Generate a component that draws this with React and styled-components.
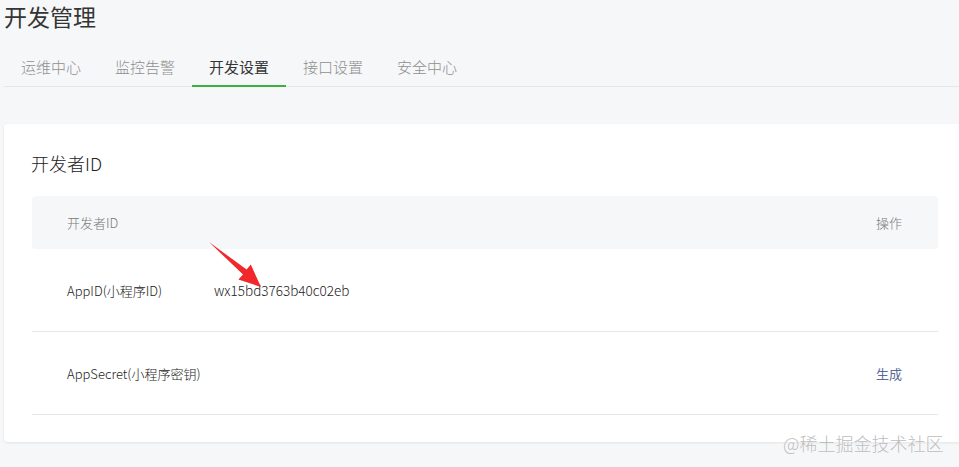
import React from "react";
import styled, { createGlobalStyle } from "styled-components";

const Global = createGlobalStyle`
  html, body { margin: 0; padding: 0; background: #f6f7f9; overflow: hidden; }
  body { font-family: "Noto Sans CJK SC", "Noto Sans", sans-serif; color: #353535; font-weight: 400; }
`;

const Page = styled.div`
  position: relative;
  width: 962px;
  height: 467px;
  padding-left: 4px;
  box-sizing: content-box;
`;

const Title = styled.h1`
  margin: 0;
  font-size: 23px;
  font-weight: 400;
  line-height: 32px;
  color: #353535;
`;

const Tabs = styled.nav`
  display: flex;
  margin-top: 15px;
  border-bottom: 1px solid #e4e6e8;
`;

const Tab = styled.div`
  position: relative;
  height: 39px;
  line-height: 39px;
  padding: 0 17px;
  font-size: 15px;
  font-weight: ${(p) => (p.$active ? 400 : 300)};
  color: ${(p) => (p.$active ? "#353535" : "#8f8f8f")};
  &::after {
    content: "";
    display: ${(p) => (p.$active ? "block" : "none")};
    position: absolute;
    left: 0;
    right: 0;
    bottom: -1px;
    height: 2px;
    background: #3db03d;
  }
`;

const Card = styled.section`
  margin-top: 37px;
  background: #fff;
  border-radius: 4px;
  box-shadow: 0 1px 3px rgba(0, 0, 0, 0.08);
  padding: 26px 28px 27px;
`;

const CardTitle = styled.h2`
  margin: 0 0 20px -1px;
  font-size: 18px;
  font-weight: 300;
  line-height: 26px;
  color: #222;
`;

const Table = styled.div`
  display: flex;
  flex-direction: column;
`;

const HeadRow = styled.div`
  display: flex;
  align-items: center;
  height: 53px;
  padding: 0 36px 0 35px;
  background: #f6f7f9;
  border-radius: 4px;
  font-size: 13px;
  font-weight: 300;
  color: #7a7a7a;
`;

const Row = styled.div`
  display: flex;
  align-items: center;
  height: 82px;
  padding: 0 36px 0 35px;
  border-bottom: 1px solid #e7e7e7;
  font-size: 13px;
  font-weight: 300;
  color: #222;
`;

const Label = styled.div`
  width: 147px;
  flex: none;
`;

const Value = styled.div`
  flex: 1;
  font-size: 13.5px;
`;

const Action = styled.div`
  flex: none;
  font-size: 13px;
  font-weight: ${(p) => (p.$link ? 400 : 300)};
  color: ${(p) => (p.$link ? "#576b95" : "inherit")};
`;

const Arrow = styled.svg`
  position: absolute;
  left: 0;
  top: 0;
  pointer-events: none;
`;

const Watermark = styled.div`
  position: absolute;
  left: 783px;
  top: 428px;
  font-size: 18px;
  font-weight: 300;
  line-height: 30px;
  color: #bdbdbd;
  text-shadow: 0 0 1px #fff;
  white-space: nowrap;
`;

export default function App() {
  const tabs = ["运维中心", "监控告警", "开发设置", "接口设置", "安全中心"];
  return (
    <>
      <Global />
      <Page>
        <Title>开发管理</Title>
        <Tabs>
          {tabs.map((t) => (
            <Tab key={t} $active={t === "开发设置"}>
              {t}
            </Tab>
          ))}
        </Tabs>
        <Card>
          <CardTitle>开发者ID</CardTitle>
          <Table>
            <HeadRow>
              <Label>开发者ID</Label>
              <Value />
              <Action>操作</Action>
            </HeadRow>
            <Row>
              <Label>AppID(小程序ID)</Label>
              <Value>wx15bd3763b40c02eb</Value>
            </Row>
            <Row>
              <Label>AppSecret(小程序密钥)</Label>
              <Value />
              <Action $link>生成</Action>
            </Row>
          </Table>
        </Card>
        <Arrow width="959" height="467" viewBox="0 0 959 467">
          <polygon
            points="209,242 246.6,269.6 250.8,264.6 261,287 238.4,279.6 243,274.6"
            fill="#f0282c"
          />
        </Arrow>
        <Watermark>@稀土掘金技术社区</Watermark>
      </Page>
    </>
  );
}
